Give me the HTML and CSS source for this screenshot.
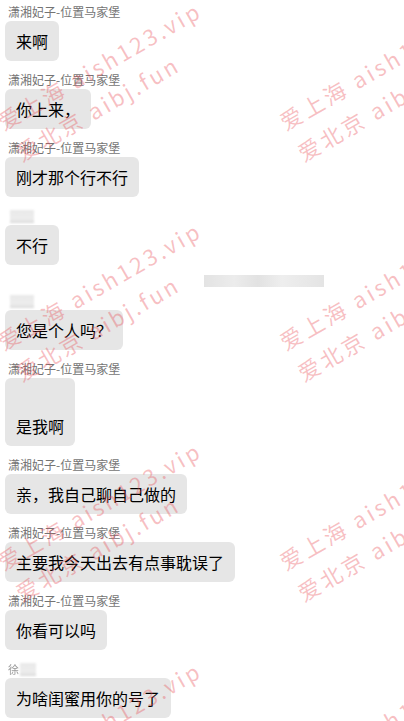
FILE: index.html
```html
<!DOCTYPE html>
<html lang="zh-CN">
<head>
<meta charset="utf-8">
<title>聊天记录</title>
<link rel="stylesheet" href="styles.css">
</head>
<body>
<div class="page">
  <div class="chat">
    <div class="msg first">
      <div class="name">潇湘妃子-位置马家堡</div>
      <div class="bubble">来啊</div>
    </div>
    <div class="msg">
      <div class="name">潇湘妃子-位置马家堡</div>
      <div class="bubble">你上来，</div>
    </div>
    <div class="msg">
      <div class="name">潇湘妃子-位置马家堡</div>
      <div class="bubble">刚才那个行不行</div>
    </div>
    <div class="msg">
      <div class="name"><span class="blur-name"></span></div>
      <div class="bubble">不行</div>
    </div>
    <div class="time-blur"></div>
    <div class="msg after-time">
      <div class="name"><span class="blur-name"></span></div>
      <div class="bubble">您是个人吗？</div>
    </div>
    <div class="msg">
      <div class="name">潇湘妃子-位置马家堡</div>
      <div class="bubble tall">是我啊</div>
    </div>
    <div class="msg">
      <div class="name">潇湘妃子-位置马家堡</div>
      <div class="bubble">亲，我自己聊自己做的</div>
    </div>
    <div class="msg">
      <div class="name">潇湘妃子-位置马家堡</div>
      <div class="bubble">主要我今天出去有点事耽误了</div>
    </div>
    <div class="msg">
      <div class="name">潇湘妃子-位置马家堡</div>
      <div class="bubble">你看可以吗</div>
    </div>
    <div class="msg">
      <div class="name"><span class="blur-char">徐</span><span class="blur-name short"></span></div>
      <div class="bubble">为啥闺蜜用你的号了</div>
    </div>
  </div>

  <div class="wm-layer" aria-hidden="true">
    <div class="wm"><div>爱上海 aish123.vip</div><div>爱北京 aibj.fun</div></div>
    <div class="wm"><div>爱上海 aish123.vip</div><div>爱北京 aibj.fun</div></div>
    <div class="wm"><div>爱上海 aish123.vip</div><div>爱北京 aibj.fun</div></div>
    <div class="wm"><div>爱上海 aish123.vip</div><div>爱北京 aibj.fun</div></div>
    <div class="wm"><div>爱上海 aish123.vip</div><div>爱北京 aibj.fun</div></div>
    <div class="wm"><div>爱上海 aish123.vip</div><div>爱北京 aibj.fun</div></div>
    <div class="wm"><div>爱上海 aish123.vip</div><div>爱北京 aibj.fun</div></div>
    <div class="wm"><div>爱上海 aish123.vip</div><div>爱北京 aibj.fun</div></div>
  </div>
</div>
</body>
</html>
```

FILE: styles.css
```css
html, body {
  margin: 0;
  padding: 0;
  height: 721px;
  overflow: hidden;
  background: #ffffff;
}

body {
  font-family: "Noto Sans CJK SC", "Noto Sans", sans-serif;
  color: #000;
}

.page {
  position: relative;
  height: 721px;
  overflow: hidden;
}

.chat {
  display: flex;
  flex-direction: column;
  align-items: flex-start;
  padding-top: 4px;
}

.msg {
  display: flex;
  flex-direction: column;
  align-items: flex-start;
  margin-top: 11px;
}

.msg.first {
  margin-top: 0;
}

.msg.after-time {
  margin-top: 6px;
}

.name {
  height: 16px;
  line-height: 16px;
  font-size: 12px;
  color: #747474;
  padding-left: 8px;
  margin-bottom: 1px;
  display: flex;
  align-items: center;
  white-space: nowrap;
}

.blur-name {
  display: inline-block;
  width: 24px;
  height: 13px;
  margin-left: 2px;
  background: linear-gradient(180deg, #e9e9e9 0%, #ededed 70%, #d9d9d9 100%);
  filter: blur(1px);
}

.blur-name.short {
  width: 16px;
  margin-left: 1px;
}

.blur-char {
  color: #9a9a9a;
  filter: blur(0.6px);
  font-size: 11px;
}

.bubble {
  margin-left: 5px;
  background: #e6e6e6;
  border-radius: 6px;
  padding: 10px 11px;
  font-size: 16px;
  line-height: 20px;
  white-space: nowrap;
}

.bubble.tall {
  padding-top: 38px;
}

.time-blur {
  margin: 10px 0 0 204px;
  width: 120px;
  height: 12px;
  background: linear-gradient(90deg, #e3e3e3 0%, #ececec 25%, #e2e2e2 45%, #eeeeee 65%, #e4e4e4 100%);
  filter: blur(0.6px);
}

.wm-layer {
  position: absolute;
  left: -10px;
  top: 107px;
  display: grid;
  grid-template-columns: repeat(2, 282px);
  grid-auto-rows: 220px;
  pointer-events: none;
}

.wm {
  transform: rotate(-30deg);
  transform-origin: 0 0;
  font-family: "Noto Sans CJK SC", "Noto Sans", sans-serif;
  font-size: 22px;
  line-height: 36px;
  letter-spacing: 3px;
  white-space: nowrap;
  color: rgba(232, 70, 80, 0.34);
}
```
